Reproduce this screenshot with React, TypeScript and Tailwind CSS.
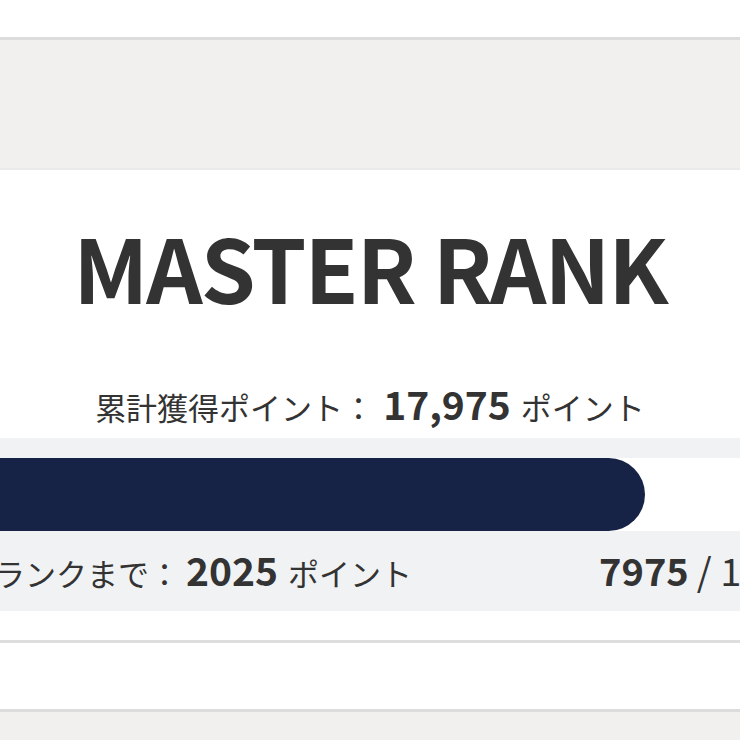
import React from "react";

const font = { fontFamily: '"Noto Sans CJK JP", "Noto Sans", sans-serif' };

const RankCard: React.FC = () => {
  const current = 7975;
  const goal = 10000;
  const pct = (current / goal) * 100;

  return (
    <div className="w-[740px] h-[740px] overflow-hidden bg-white text-[#333333]" style={font}>
      {/* top header band */}
      <div className="h-[37px] bg-white" />
      <div className="h-[131px] bg-[#f1f0ee] border-t-[3px] border-[#dcdcdc]" />
      <div className="h-[2px] bg-[#eaeaea]" />

      {/* rank card */}
      <div className="-ml-[92px] w-[924px]">
        <div className="flex flex-col items-center pt-[52px]">
          <h1 className="text-[88px] leading-none font-bold tracking-[-2px]">MASTER RANK</h1>
          <p className="mt-[69px] flex items-baseline text-[31px] leading-[48px] h-[48px]">
            <span>累計獲得ポイント：</span>
            <span className="ml-[9px] text-[39px] font-bold">17,975</span>
            <span className="ml-[10px]">ポイント</span>
          </p>
        </div>

        <div className="mt-[11px] bg-[#f1f2f4] pt-[20px] h-[173px]">
          <div className="h-[73px] bg-white">
            <div className="h-full bg-[#162246] rounded-r-full" style={{ width: `${pct}%` }} />
          </div>
          <div className="flex items-baseline pl-[24px] mt-[14px] h-[48px] leading-[48px]">
            <p className="flex items-baseline text-[31px]">
              <span>次のランクまで：</span>
              <span className="ml-[6px] text-[39px] font-bold">2025</span>
              <span className="ml-[10px]">ポイント</span>
            </p>
            <p className="ml-[187px] flex items-baseline text-[38px]">
              <span className="font-bold">7975</span>
              <span className="ml-[8px]">/ 10000</span>
            </p>
          </div>
        </div>
      </div>

      <div className="h-[29px] bg-white" />
      <div className="h-[3px] bg-[#dedede]" />
      <div className="h-[66px] bg-white" />
      <div className="h-[3px] bg-[#dcdcdc]" />
      <div className="h-[40px] bg-[#f1f0ee]" />
    </div>
  );
};

export default function App() {
  return <RankCard />;
}
